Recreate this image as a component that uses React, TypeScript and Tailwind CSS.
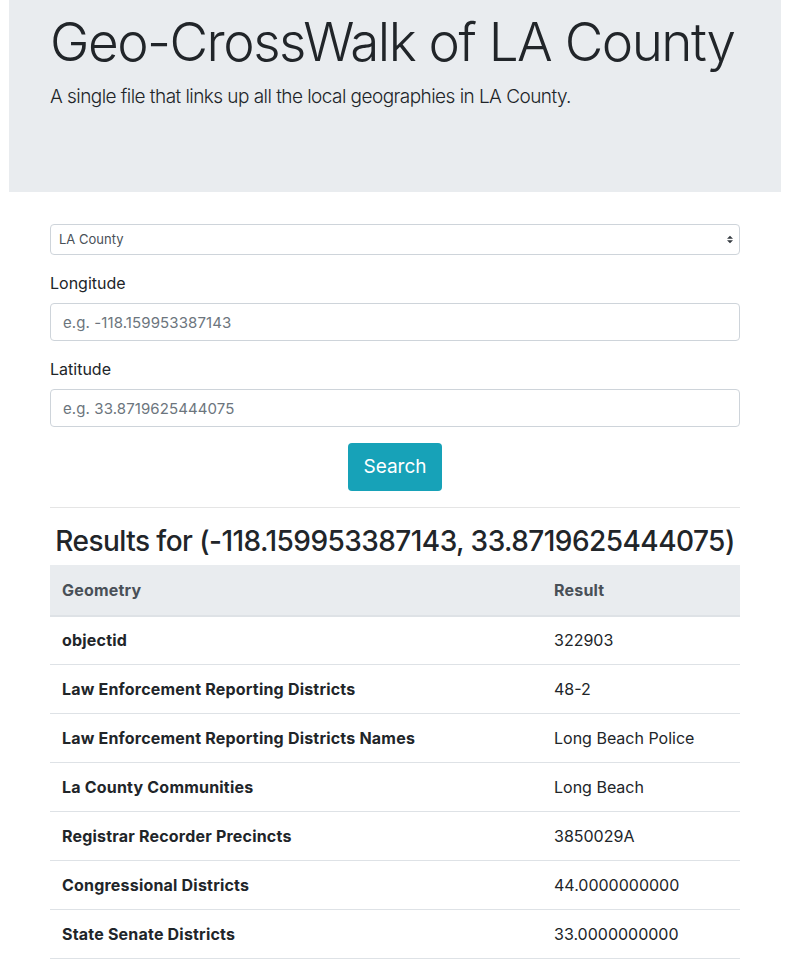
import React from 'react';

const ROWS: [string, string][] = [
  ['objectid', '322903'],
  ['Law Enforcement Reporting Districts', '48-2'],
  ['Law Enforcement Reporting Districts Names', 'Long Beach Police'],
  ['La County Communities', 'Long Beach'],
  ['Registrar Recorder Precincts', '3850029A'],
  ['Congressional Districts', '44.0000000000'],
  ['State Senate Districts', '33.0000000000'],
];

export default function App() {
  return (
    <div className="min-h-screen bg-white text-[#212529] font-['Inter',sans-serif]">
      {/* jumbotron */}
      <div className="ml-[9px] h-[192px] w-[772px] bg-[#e9ecef] pl-[41px] pt-[11px]">
        <h1 className="text-[53px] font-light leading-[1.2] tracking-[-1.5px]">Geo-CrossWalk of LA County</h1>
        <p className="mt-[8px] text-[19px] font-light tracking-[-0.55px]">
          A single file that links up all the local geographies in LA County.
        </p>
      </div>

      <div className="mx-[50px] w-[690px] pt-[32px]">
        <div className="relative">
          <select className="h-[31px] w-full appearance-none rounded border border-[#ced4da] bg-white pl-[8px] text-[13px] text-[#495057]">
            <option>LA County</option>
          </select>
          <svg className="pointer-events-none absolute right-[7px] top-[11px]" width="6" height="9" viewBox="0 0 4 5">
            <path d="M2 0L0 2h4zm0 5L0 3h4z" fill="#343a40" />
          </svg>
        </div>

        <label className="mt-[16px] block text-[16px] leading-[24px]">Longitude</label>
        <input
          className="mt-[8px] h-[38px] w-full rounded border border-[#ced4da] px-[12px] text-[15px] tracking-[0.1px] placeholder:text-[#6c757d]"
          placeholder="e.g. -118.159953387143"
        />

        <label className="mt-[16px] block text-[16px] leading-[24px]">Latitude</label>
        <input
          className="mt-[8px] h-[38px] w-full rounded border border-[#ced4da] px-[12px] text-[15px] tracking-[0.1px] placeholder:text-[#6c757d]"
          placeholder="e.g. 33.8719625444075"
        />

        <div className="mt-[16px] flex justify-center">
          <button className="h-[48px] w-[94px] rounded bg-[#17a2b8] text-[19px] text-white">Search</button>
        </div>

        <hr className="mt-[16px] border-t border-[#e5e5e5]" />

        <h3 className="mt-[17px] text-center text-[28px] font-medium leading-[1.2] tracking-[-0.55px]">
          Results for (-118.159953387143, 33.8719625444075)
        </h3>

        <table className="mt-[6px] w-full border-collapse text-[16px]">
          <thead>
            <tr className="bg-[#e9ecef] text-[#495057]">
              <th className="h-[51px] w-[492px] border-b-2 border-[#dee2e6] px-[12px] pt-[1px] text-left font-bold tracking-[0.2px]">Geometry</th>
              <th className="h-[51px] border-b-2 border-[#dee2e6] px-[12px] pt-[1px] text-left font-bold tracking-[0.2px]">Result</th>
            </tr>
          </thead>
          <tbody>
            {ROWS.map(([k, v]) => (
              <tr key={k} className="border-b border-[#dee2e6]">
                <th className="h-[49px] px-[12px] text-left font-bold tracking-[0.2px]">{k}</th>
                <td className="h-[49px] px-[12px]">{v}</td>
              </tr>
            ))}
          </tbody>
        </table>
      </div>
    </div>
  );
}
